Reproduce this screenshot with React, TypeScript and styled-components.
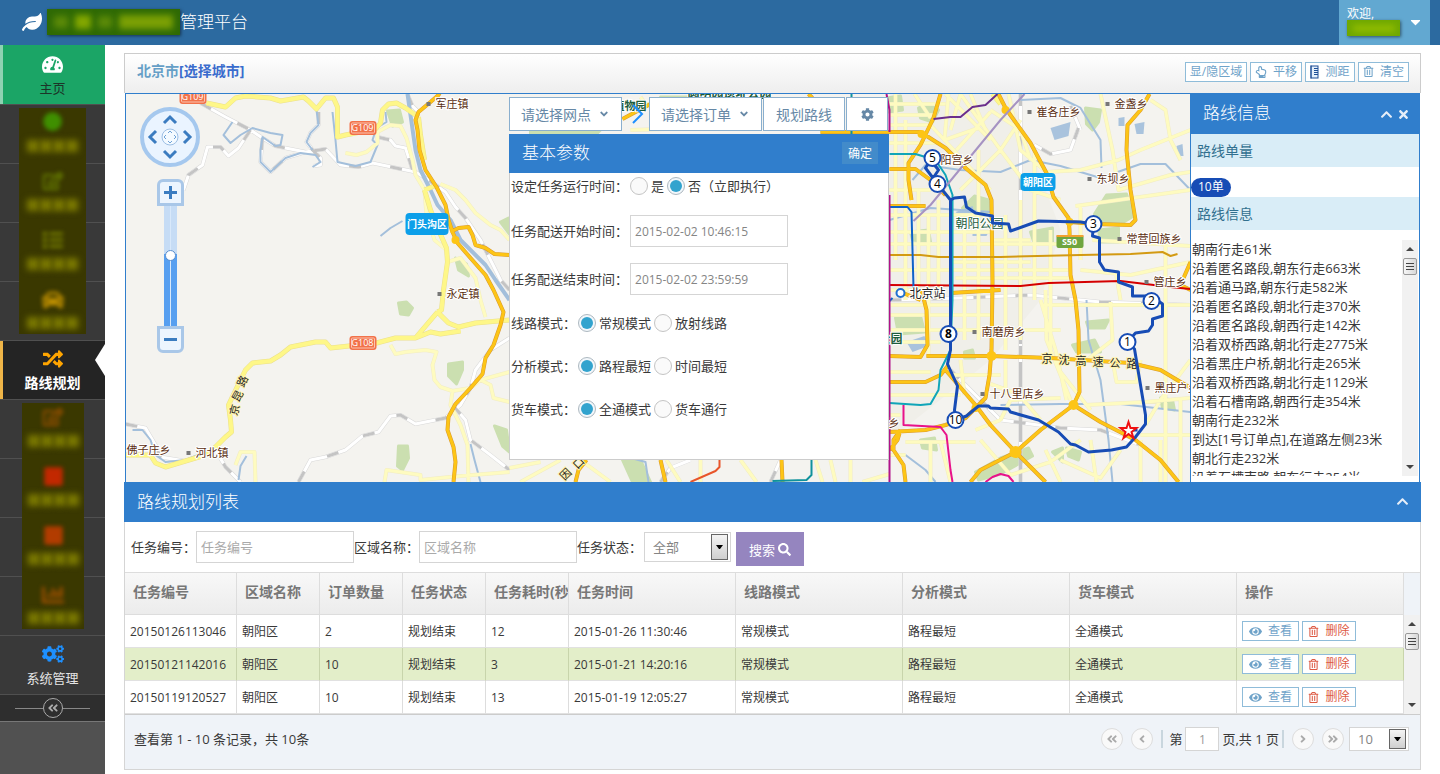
import React from 'react';
import styled, { createGlobalStyle, css } from 'styled-components';
import {
  FaLeaf, FaTachometerAlt, FaRandom, FaCogs, FaAngleDoubleLeft, FaAngleDoubleRight, FaAngleLeft,
  FaAngleRight, FaAngleDown, FaChevronUp, FaTimes, FaCog, FaSearch, FaEye, FaRegTrashAlt,
  FaRegHandPointUp, FaCaretDown, FaRegEdit, FaCircle, FaList, FaCar, FaChartBar, FaSquare,
} from 'react-icons/fa';

const BLUE = '#307ecc';
const FONT = '"Open Sans", "Noto Sans CJK SC", sans-serif';

const GlobalStyle = createGlobalStyle`
  * { box-sizing: border-box; }
  body { margin: 0; background: #fff; color: #393939; font: 13px/19px ${FONT}; }
  button, input, select { font-family: inherit; margin: 0; border-radius: 0; outline: none; }
  button { cursor: pointer; }
  a { text-decoration: none; }
`;

/* ---------- frame ---------- */
const Page = styled.div`
  min-height: 100vh;
  display: flex;
  flex-direction: column;
`;
const NavBar = styled.header`
  height: 45px;
  display: flex;
  align-items: center;
  justify-content: space-between;
  padding: 0 10px 0 22px;
  background: #2c6aa0;
  color: #fff;
`;
const Brand = styled.div`
  display: flex;
  align-items: center;
  gap: 5px;
  padding-bottom: 2px;
  font-size: 17px;
  font-weight: 300;
`;
const BrandName = styled.div`
  display: flex;
  align-items: center;
`;
const Masked = styled.span<{ $w: number; $h: number; $bg: string }>`
  display: flex;
  align-items: center;
  justify-content: space-evenly;
  overflow: hidden;
  width: ${p => p.$w}px;
  height: ${p => p.$h}px;
  background: ${p => p.$bg};
  box-shadow: 1px 1px 3px rgba(0, 0, 0, 0.5);
`;
const Smudge = styled.i<{ $w: number; $h: number; $c: string }>`
  width: ${p => p.$w}px;
  height: ${p => p.$h}px;
  background: ${p => p.$c};
  filter: blur(3px);
`;
const UserMenu = styled.button`
  align-self: stretch;
  width: 91px;
  display: flex;
  align-items: center;
  gap: 8px;
  padding: 0 7px 2px 8px;
  border: 0;
  background: #62a8d1;
  color: #fff;
  text-align: left;
  font-size: 12px;
  line-height: 13px;
`;
const UserText = styled.span`
  display: flex;
  flex-direction: column;
`;
const Body = styled.div`
  flex: 1;
  display: flex;
`;

/* ---------- sidebar ---------- */
const SideBar = styled.nav`
  width: 105px;
  flex: none;
  display: flex;
  flex-direction: column;
  background: #515151;
`;
const SideGroup = styled.div`
  position: relative;
`;
const SideItem = styled.a<{ $kind?: 'home' | 'active' }>`
  position: relative;
  height: 59px;
  display: flex;
  flex-direction: column;
  align-items: center;
  gap: 3px;
  padding-top: 7px;
  border-bottom: 1px solid #505050;
  background: #393939;
  color: #e4e4e4;
  font-size: 13px;
  line-height: 20px;
  ${p => p.$kind === 'home' && css`
    height: 60px;
    padding-top: 8px;
    background: #1ba566;
    box-shadow: inset 3px 0 #8ed2b2;
    color: #1c3428;
  `}
  ${p => p.$kind === 'active' && css`
    background: #242424;
    box-shadow: inset 3px 0 #efb548;
    color: #fff;
    font-weight: bold;
    font-size: 14px;
    &::after {
      content: '';
      position: absolute;
      right: 0;
      top: 3px;
      border: solid transparent;
      border-width: 16px 10px 16px 0;
      border-right-color: #fff;
    }
  `}
`;
const SideIcon = styled.span<{ $c: string }>`
  height: 22px;
  display: flex;
  align-items: center;
  color: ${p => p.$c};
`;
const SideMask = styled.div<{ $l: number; $w: number }>`
  position: absolute;
  top: 3px;
  bottom: 7px;
  left: ${p => p.$l}px;
  width: ${p => p.$w}px;
  display: grid;
  grid-auto-rows: 59px;
  overflow: hidden;
  background: #3a3800;
`;
const MaskCell = styled.div`
  display: flex;
  flex-direction: column;
  align-items: center;
  gap: 8px;
  padding-top: 4px;
`;
const MaskIcon = styled.span<{ $c: string }>`
  height: 20px;
  display: flex;
  color: ${p => p.$c};
  filter: blur(2px);
`;
const MaskWord = styled.span`
  display: flex;
  gap: 1px;
`;
const Collapse = styled.button`
  height: 27px;
  display: flex;
  align-items: center;
  padding: 0 15px;
  border: 0;
  border-bottom: 1px solid #777;
  background: #2e2e2e;
  color: #aaa;
  &::before, &::after { content: ''; flex: 1; height: 1px; background: #888; }
`;
const CollapseDot = styled.span`
  width: 20px;
  height: 20px;
  display: flex;
  align-items: center;
  justify-content: center;
  border: 1px solid #aaa;
  border-radius: 50%;
`;

/* ---------- main ---------- */
const Main = styled.main`
  flex: 1;
  min-width: 0;
  padding: 8px 19px 4px;
`;
const TitleBar = styled.div`
  height: 40px;
  display: flex;
  align-items: center;
  justify-content: space-between;
  padding: 0 11px 4px 12px;
  border: 1px solid #ccc;
  border-bottom: 0;
  background: linear-gradient(#fff, #eee);
`;
const City = styled.div`
  padding-bottom: 2px;
  font-size: 14px;
  font-weight: bold;
  color: #669fc7;
  a { color: #3a6ccd; }
`;
const Tools = styled.div`
  display: flex;
  gap: 3px;
`;
const SmallButton = styled.button<{ $c?: string; $w: number }>`
  width: ${p => p.$w}px;
  height: 20px;
  display: inline-flex;
  align-items: center;
  justify-content: center;
  gap: 6px;
  padding: 0;
  border: 1px solid #8fbcd9;
  background: #fff;
  color: ${p => p.$c || '#6fa3c9'};
  font-size: 12px;
  line-height: 18px;
  white-space: nowrap;
`;

const MapRow = styled.div`
  display: flex;
  margin: 0 1px;
  border: solid ${BLUE};
  border-width: 1px 1px 0;
`;
const MapArea = styled.div`
  position: relative;
  flex: 1;
  min-width: 0;
  height: 388px;
  overflow: hidden;
`;
const MapSvg = styled.svg`
  display: block;
  width: 100%;
  height: 100%;
`;
const NavControl = styled.div`
  position: absolute;
  left: 14px;
  top: 13px;
  display: flex;
  flex-direction: column;
  align-items: center;
`;
const ZoomButton = styled.button<{ $last?: boolean }>`
  width: 27px;
  height: 27px;
  padding: 0;
  border: 3px solid #a9c7e8;
  border-radius: ${p => (p.$last ? '0 0 6px 6px' : '6px 6px 0 0')};
  background: #edf5fe;
  display: flex;
  align-items: center;
  justify-content: center;
  margin-top: ${p => (p.$last ? 0 : 12)}px;
`;
const ZoomRange = styled.input`
  appearance: none;
  writing-mode: vertical-lr;
  direction: rtl;
  width: 13px;
  height: 120px;
  padding: 0;
  background: linear-gradient(90deg, transparent 6px, #d8e8fa 6px, #d8e8fa 7px, transparent 7px),
    linear-gradient(#c6dcf5 40%, #579ff0 40%);
  &::-webkit-slider-thumb {
    appearance: none;
    width: 11px;
    height: 11px;
    border: 1px solid #5a8fcf;
    border-radius: 50%;
    background: #fff;
  }
`;
const MapTools = styled.div`
  position: absolute;
  left: 383px;
  top: 3px;
  display: flex;
  align-items: center;
`;
const MapButton = styled.button<{ $w: number }>`
  width: ${p => p.$w}px;
  height: 34px;
  margin-right: 1px;
  display: flex;
  align-items: center;
  justify-content: center;
  gap: 7px;
  padding: 0;
  border: 1px solid #8aafce;
  background: #fff;
  color: #6688a6;
  font-size: 14px;
`;
const Arrow = styled.svg`
  width: 26px;
  height: 24px;
`;
const Params = styled.form`
  position: absolute;
  left: 383px;
  top: 40px;
  width: 380px;
  height: 326px;
  border: 1px solid #ccc;
  border-top: 0;
  background: #fff;
`;
const PanelHead = styled.div<{ $h: number; $pr: number }>`
  height: ${p => p.$h}px;
  display: flex;
  align-items: center;
  justify-content: space-between;
  padding: 0 ${p => p.$pr}px 2px 13px;
  background: ${BLUE};
  color: #fff;
  h2 { margin: 0; font-size: 17px; font-weight: 300; }
`;
const ParamHead = styled(PanelHead)`
  margin: 0 -1px;
`;
const OkButton = styled.button`
  width: 36px;
  height: 22px;
  padding: 0;
  border: 0;
  background: #428bca;
  color: #fff;
  font-size: 12px;
`;
const ParamRows = styled.div`
  display: grid;
  grid-template-rows: 26px 64px 32px 56px 30px 56px;
  align-items: center;
`;
const ParamRow = styled.div`
  display: flex;
  align-items: center;
  padding-left: 1px;
`;
const ParamLabel = styled.label`
  padding-right: 2px;
`;
const Choice = styled.label`
  display: flex;
  align-items: center;
  gap: 3px;
  margin-right: 3px;
`;
const Radio = styled.input`
  appearance: none;
  width: 18px;
  height: 18px;
  border: 1px solid #c4c4c4;
  border-radius: 9px;
  background: #fafafa;
  display: flex;
  align-items: center;
  justify-content: center;
  &:checked { border-color: #adb8c0; background: #f2f7fb; }
  &:checked::after {
    content: '';
    width: 12px;
    height: 12px;
    border-radius: 50%;
    background: #32a3ce;
  }
`;
const TextBox = styled.input`
  width: 158px;
  height: 32px;
  padding: 0 4px;
  border: 1px solid #d5d5d5;
  background: #fff;
  color: #858585;
  font-size: 12px;
  &::placeholder { color: #aaa; font-size: 13px; }
`;

/* ---------- route info ---------- */
const Info = styled.aside`
  width: 229px;
  flex: none;
  height: 388px;
  border-left: 1px solid ${BLUE};
  display: flex;
  flex-direction: column;
  align-items: flex-start;
  background: #fff;
`;
const InfoHead = styled(PanelHead)`
  width: 100%;
  padding-left: 12px;
  padding-bottom: 4px;
`;
const HeadIcons = styled.span`
  display: flex;
  gap: 4px;
  padding-top: 4px;
`;
const IconButton = styled.button`
  display: flex;
  padding: 0;
  border: 0;
  background: none;
  color: #e6eef8;
`;
const InfoSection = styled.h3`
  width: 100%;
  height: 33px;
  margin: 0;
  padding: 0 6px;
  background: #d9edf7;
  color: #31708f;
  font-size: 14px;
  line-height: 34px;
  font-weight: normal;
`;
const Badge = styled.span`
  height: 19px;
  margin-top: 11px;
  padding: 0 7px;
  border-radius: 10px;
  background: #174cb5;
  color: #fff;
  font-size: 12px;
  line-height: 18px;
`;
const StepsBox = styled.div`
  width: 100%;
  height: 236px;
  margin-top: 10px;
  padding-right: 1px;
  display: flex;
  overflow: hidden;
`;
const Steps = styled.ol`
  flex: 1;
  margin: 0;
  padding: 0 0 0 1px;
  list-style: none;
  white-space: nowrap;
`;
const ScrollTrack = styled.div`
  width: 16px;
  display: flex;
  flex-direction: column;
  align-items: center;
  background: #f1f1f1;
`;
const ScrollThumb = styled.span`
  width: 14px;
  height: 17px;
  flex: none;
  display: flex;
  align-items: center;
  justify-content: center;
  border: 1px solid #999;
  border-radius: 2px;
  background: linear-gradient(90deg, #f6f6f6, #d8d8d8);
`;
const ScrollArrow = styled.svg`
  width: 16px;
  height: 18px;
  &:last-child { margin-top: auto; }
`;

/* ---------- list ---------- */
const ListBody = styled.section`
  border: 1px solid #d5d5d5;
  border-top: 0;
`;
const Filter = styled.form`
  height: 50px;
  display: flex;
  align-items: center;
  padding: 0 6px;
  label { white-space: nowrap; }
`;
const FilterSelect = styled.span<{ $w: number; $h: number }>`
  position: relative;
  display: flex;
  select {
    appearance: none;
    width: ${p => p.$w}px;
    height: ${p => p.$h}px;
    padding: 0 8px;
    border: 1px solid #d5d5d5;
    background: #fff;
    color: #858585;
    font-size: 13px;
  }
`;
const StateSelect = styled(FilterSelect)`
  margin-left: 2px;
`;
const SelectArrow = styled.span`
  position: absolute;
  right: 3px;
  top: 2px;
  bottom: 2px;
  width: 17px;
  display: flex;
  align-items: center;
  justify-content: center;
  border: 1px solid #666;
  background: linear-gradient(#f4f4f4, #cfcfcf);
  color: #000;
  pointer-events: none;
`;
const SearchButton = styled.button`
  width: 68px;
  height: 34px;
  margin: 4px 0 0 5px;
  display: flex;
  align-items: center;
  justify-content: center;
  gap: 3px;
  padding: 0;
  border: 0;
  background: #9585bf;
  color: #fff;
  font-size: 13px;
`;
const TableWrap = styled.div`
  display: flex;
  background: #eff3f8;
  border-top: 1px solid #ddd;
  border-bottom: 1px solid #ccc;
`;
const TableBox = styled.div`
  flex: 1;
  min-width: 0;
`;
const Table = styled.table`
  width: 100%;
  table-layout: fixed;
  border-collapse: separate;
  border-spacing: 0;
  background: #fff;
  th, td {
    overflow: hidden;
    white-space: nowrap;
    text-align: left;
    border-right: 1px solid #ddd;
  }
  th {
    height: 42px;
    padding: 0 0 4px 8px;
    border-bottom: 1px solid #ddd;
    background: linear-gradient(#f8f8f8, #ececec);
    color: #777;
    font-size: 14px;
  }
  td {
    height: 33px;
    padding: 0 5px;
    border-bottom: 1px solid #e1e1e1;
    font-size: 12px;
  }
`;
const Row = styled.tr<{ $on?: boolean }>`
  background: ${p => (p.$on ? '#e3eec9' : '#fff')};
  td { border-right-color: ${p => (p.$on ? '#c8d4ab' : '#ddd')}; }
`;
const Actions = styled.div`
  display: flex;
  gap: 3px;
`;
const TableScroll = styled.div`
  width: 17px;
  display: flex;
  justify-content: center;
  padding-top: 42px;
`;
const Pager = styled.footer`
  height: 54px;
  display: flex;
  justify-content: space-between;
  align-items: center;
  padding: 0 11px 6px 9px;
  background: #eff3f8;
`;
const PagerControls = styled.div`
  display: flex;
  align-items: center;
`;
const RoundGroup = styled.span`
  display: flex;
  gap: 8px;
  margin: 0 5px 0 2px;
`;
const Round = styled.button`
  width: 22px;
  height: 22px;
  display: flex;
  align-items: center;
  justify-content: center;
  padding: 0;
  border: 1px solid #ddd;
  border-radius: 50%;
  background: #f9f9f9;
  color: #aaa;
`;
const Divider = styled.span`
  width: 2px;
  height: 18px;
  margin: 0 6px 0 3px;
  background: #c9d6de;
`;
const PageNo = styled.input`
  width: 34px;
  height: 24px;
  margin: 0 3px;
  padding: 0;
  border: 1px solid #d5d5d5;
  text-align: center;
  color: #999;
  font-size: 12px;
`;

/* ---------- data ---------- */
const steps = [
  '朝南行走61米', '沿着匿名路段,朝东行走663米', '沿着通马路,朝东行走582米', '沿着匿名路段,朝北行走370米',
  '沿着匿名路段,朝西行走142米', '沿着双桥西路,朝北行走2775米', '沿着黑庄户桥,朝北行走265米',
  '沿着双桥西路,朝北行走1129米', '沿着石槽南路,朝西行走354米', '朝南行走232米',
  '到达[1号订单点],在道路左侧23米', '朝北行走232米', '沿着石槽南路,朝东行走254米',
];
const columns: [string, number][] = [
  ['任务编号', 112], ['区域名称', 83], ['订单数量', 83], ['任务状态', 83], ['任务耗时(秒)', 83],
  ['任务时间', 167], ['线路模式', 167], ['分析模式', 167], ['货车模式', 167], ['操作', 167],
];
const rows = [
  ['20150126113046', '朝阳区', '2', '规划结束', '12', '2015-01-26 11:30:46', '常规模式', '路程最短', '全通模式'],
  ['20150121142016', '朝阳区', '10', '规划结束', '3', '2015-01-21 14:20:16', '常规模式', '路程最短', '全通模式'],
  ['20150119120527', '朝阳区', '10', '规划结束', '13', '2015-01-19 12:05:27', '常规模式', '路程最短', '全通模式'],
];
const modes = [
  { label: '线路模式：', name: 'line', options: ['常规模式', '放射线路'] },
  { label: '分析模式：', name: 'analysis', options: ['路程最短', '时间最短'] },
  { label: '货车模式：', name: 'truck', options: ['全通模式', '货车通行'] },
];

/* ---------- map data ---------- */
const parks = [
  '387,111 399,110 402,122 392,126', '398,303 406,302 412,308 408,315 400,314', '448,364 462,362 462,370 456,384 448,376',
  '398,446 407,446 408,458 402,470 397,466', '494,426 506,430 509,452 502,446', '622,460 640,460 650,482 632,482',
  '918,108 930,104 938,110 932,122 920,118', '1085,108 1100,110 1098,122 1092,130 1086,124',
  '1106,195 1126,194 1133,216 1120,224 1104,222 1094,214', '974,196 988,200 990,212 975,216 962,208',
  '1030,232 1052,228 1052,242 1034,244', '1098,230 1118,228 1118,242 1100,242', '1072,345 1094,340 1100,352 1076,352',
  '975,472 1000,458 1028,448 1032,456 1000,474 978,480', '1066,448 1080,452 1078,460 1068,456', '1160,398 1172,400 1174,410 1162,408',
  '895,318 920,316 924,332 898,334', '964,352 972,350 974,358 964,358', '1052,452 1062,448 1062,462', '455,258 466,264 468,276 458,270',
  '500,222 508,218 509,234', '886,98 900,96 902,110 888,112', '1086,322 1108,320 1104,328 1088,328', '920,440 934,438 936,450 922,448',
  '660,97 690,97 690,112 664,110', '530,130 600,130 596,134 530,134', '910,232 928,230 930,242 912,240',
];
const waters = [
  '1050,128 1070,122 1068,136 1054,140', '1134,124 1144,122 1143,134 1136,134', '1118,118 1124,117 1124,126 1118,126',
  '955,212 972,206 974,213 960,216', '906,342 924,336 928,346 912,352', '1176,146 1182,144 1183,156 1178,156', '972,230 988,232 986,236 972,236',
];
const rivers = [
  'M232 122 223 135 230 143 240 135 252 128 270 133 282 135 280 145 275 146 262 137 260 150 260 162 270 172 285 158 300 153 315 155 320 162 312 167',
  'M316 110 318 125 310 133 306 142 312 150 M332 112 335 140 337 162 355 166 370 162 377 145 372 140 376 128 386 122 385 112',
  'M380 236 390 228 402 221', 'M132 430 142 430 150 440 155 455 165 462 185 460 215 448', 'M470 444 474 460 480 482', 'M620 455 645 462 648 482',
  'M1020 100 1060 98 1080 108 1100 140 1101 168', 'M889 220 930 208 990 212', 'M912 180 925 165 960 170 1000 172 1030 160 1060 166 1100 178 1140 164 1165 164 1190 190',
  'M1086 300 1088 340 1100 380 1108 440 1112 482', 'M1000 405 1060 404 1120 404 1190 412', 'M905 455 925 470 935 482', 'M238 480 240 466 246 456',
];
const minor = [
  'M889 115H935 M889 125H930 M889 143H940 M889 190H930 M889 232H990 M889 244H1066 M889 270H1068 M889 315H990 M889 330H1060',
  'M889 342H940 M889 372H930 M889 215H990 M889 395H960 M889 415H900 M895 94V260 M905 120V300 M918 190V300 M928 215V356 M938 200V300 M964 230V340 M978 150V340',
  'M1005 215V350 M1020 200V340 M1034 150V300 M1050 230V360 M960 94 1000 150 1030 190 1060 200 M945 94 990 140 M930 125 990 190 M960 190 1000 150 1020 120',
  'M990 110 1020 130 1030 160 M1008 94 1020 150 1046 172 1080 170 1118 160 1140 150 1190 130 M1080 204V260 M1100 94 1112 150 1118 190 1170 175 1190 172',
  'M1150 100 1165 110 1170 140 1180 160 M1075 206 1118 200 1190 190 M1092 240 1190 246 M1080 270 1130 275 1190 262 M1040 305H1190 M1045 290 1046 340 1070 400',
  'M1040 300 1055 350 1066 400 M1110 302 1112 340 1080 365 M1112 360 1116 382 1136 382 1140 360 M1060 372 1090 410 M1085 405 1145 402 1190 398',
  'M1140 435 1190 435 M1190 360 1160 400 1145 425 M990 384 1018 394 1040 420 M975 430 1000 420 M1000 420 1010 400 1060 398 M905 442H975 M930 442V482 M940 442 950 482',
  'M980 440 1010 475 1050 462 1080 440 M1045 450 1060 482 M1060 460 1100 478 1120 450 M1140 440V482 M1160 440V482 M1180 398V482 M1090 440 1096 482 M1165 240V300 1170 340',
  'M889 455H905 M960 360 964 395 M950 375H1000 M1005 360V395 M1055 305H1110 1190 M1120 300 1115 270 M914 94 930 118 M889 104H945 M960 94 950 130',
  'M948 94 944 140 978 128 M956 150 990 112 M970 94 985 130 M890 290 940 290 M890 305 950 305 M950 262 1030 262 M955 278 1068 278 M992 240 1030 240',
  'M509 468 540 462 M520 482 560 460 M580 460 610 482 M666 460 680 482 M740 460 756 482 M815 460 822 482 M830 460 835 482 M850 482V460 M862 482 889 474 M700 460V482',
  'M345 153 356 155 366 152 377 143 377 132 390 125 400 126 406 138 412 160 415 175 424 190', 'M440 184 455 190 465 200 475 213 490 225 500 230 509 240',
  'M424 190 426 215 434 240 446 250', 'M447 262 460 258 475 278 480 300 485 317', 'M390 345 395 354 405 352 425 350 436 352 432 365 434 380 440 387 452 391 470 388 480 380 509 372',
  'M452 391 450 405 460 425 467 445 468 482', 'M480 380 490 385 493 398 509 402', 'M384 482 386 470 420 475 420 480 460 476 509 472', 'M235 465 240 452 254 452 255 482',
  'M640 97 645 104 660 104 M630 130 700 128',
];
const yellow = [
  'M206 103 225 107 235 98 245 96 270 98 280 101 303 97 308 101 316 109 325 98 333 98 337 107 337 137 345 135 375 129 380 123 382 110 388 104 396 103 405 108 418 117',
  'M418 117 420 135 424 160', 'M424 190 434 186 M424 190 430 210 438 230 446 248 447 262 443 290 441 310 437 312',
  'M125 455 150 455 155 463 165 467 185 461 205 455 215 447 225 437 231 432 230 420 228 405 240 380 245 370 252 363 270 361 280 355 290 347 315 342 325 342 330 348 376 343 395 338 415 338 420 332 437 312',
  'M437 312 448 323 458 327 475 323 509 320', 'M415 338 430 332 440 334 460 331', 'M992 94 1000 104',
];
const rails = [
  'M200 103 225 117 250 130 262 138 275 146 305 152 325 149 340 165 358 167 372 163 415 172 425 178 445 192 455 207 465 218 480 240 490 260 500 280 509 290',
  'M250 130 238 148 228 156 220 147 207 147 202 165 188 175 183 190', 'M262 138 260 162 270 172 285 158 305 152', 'M318 112 318 125 310 133 306 142 312 150 320 158 320 165 313 166',
  'M377 137 390 140 395 146 405 148 412 170', 'M407 94 412 106 418 112', 'M125 424 145 428 155 445 160 457 185 461 215 450 225 467 240 482',
  'M298 482 310 460 325 457 345 450 362 436 378 432 390 416 400 415 415 424 445 418 460 405 470 388 475 370 490 350 509 338',
  'M452 405 465 420 470 440 490 455 509 470', 'M889 300 960 298 1030 295 1100 302 1190 305', 'M1020 94V270 1032 290V340 1036 370', 'M950 370 975 395 1000 420 1060 428 1100 430 1140 445',
  'M1078 128 1070 150 1050 154 1034 145', 'M1070 106 1080 130', 'M660 482 670 468 690 460', 'M770 482 780 460',
];
const highways = [
  'M441 90 438 95 430 102 418 112 415 120 417 130 419 150 425 170 436 187 445 205 448 220 452 232 457 243 470 258 485 275 493 290 503 312 500 325 493 345 485 358 482 374 470 388 455 404 448 417 447 430 453 447 455 462 453 482',
  'M450 232 458 228 468 227 472 235 475 245 485 248 494 254 509 255',
  'M998 94 1005 108 1012 118 1030 143 1046 173 1053 197 1068 218 1069 230 1070 275 1075 300 1078 330 1079 392 1073 405',
  'M889 132 920 132 945 148 965 168 985 185 991 200 992 282 991 350 989 375 985 398 975 408', 'M889 169 915 169 930 180 945 195',
  'M940 94 933 118 920 145 908 163 908 180 911 200', 'M1149 94 1140 110 1127 125 1126 150 1130 190 1135 220 1130 225 1095 224 1069 222',
  'M889 382 925 382 940 375 948 365', 'M889 432 925 430 945 425 965 418 975 408', 'M921 290 926 310 927 345 920 357 889 356', 'M920 300 900 292',
  'M926 356 990 356 1050 358 1130 363 1160 370 1190 388', 'M945 370 975 405 990 425 1015 452 1045 482',
  'M970 482 980 470 1015 452 1040 430 1073 405 1100 422 1135 440 1160 460 1178 482', 'M900 430 893 440 893 450 903 465 905 482', 'M889 206H925',
  'M950 293 1000 290', 'M660 460 665 482', 'M781 460 782 482', 'M575 482 578 470 586 460', 'M622 119 650 104', 'M889 450 897 440 900 430',
  'M1190 262 1180 285 1190 290', 'M708 94 716 98', 'M808 94 812 98', 'M820 132H889',
];
const subways: [string, string][] = [
  ['#d39a12', 'M889 255 920 255 938 257 1000 257 1080 255 1130 254 1162 252 1170 256 1177 254'],
  ['#d40000', 'M889 285 1020 286 1048 283 1120 281 1170 287 1190 289'],
  ['#10a5b8', 'M889 154 915 154 935 160 945 175 952 195 952 300 950 350 940 370 938 390 930 404 920 405 889 403'],
  ['#6b2f8c', 'M933 119 950 117 960 117 972 107 985 105 997 94'],
  ['#a693c2', 'M913 221 930 205 1000 120 1024 94'],
  ['#0e63c8', 'M889 207 907 207 911 212 913 288 M892 298 882 308'],
  ['#b0128a', 'M886 94 889 110 889 132 M889 195V300 892 325 893 402'],
  ['#e8128a', 'M903 405 903 425 940 427 946 435 950 470 952 482 M985 482 992 477 1000 474 1008 476 1013 482'],
  ['#e8552a', 'M690 482 715 471 719 467 719 460'],
  ['#10929c', 'M772 481 806 480 811 475 811 460 M851 94V134'],
];
const route = 'M1128 430 1137 430 M1127 342 1134 349 1145 415 1145 424 1135 437 1126 447 1111 450 1088 452 1075 445 1070 444 1058 432 1038 420 1010 412 1008 409 990 408 988 406 978 406 966 416 955 420 954 410 957 386 947 364 950 350 950 200 937 184 925 168 930 160 938 170 930 182 M950 200 954 198 964 197 966 207 975 213 992 216 992 223 1008 224 1010 231 1038 221 1080 222 1093 224 1092 236 1099 238 1099 262 1104 270 1118 272 1118 282 1132 287 1132 296 1151 296 1162 304 1162 316 1152 319 1152 325 1148 331 1135 333 1127 342';
const places: [number, number, string, boolean][] = [
  [435, 108, '军庄镇', true], [446, 298, '永定镇', true], [195, 457, '河北镇', true], [126, 454, '佛子庄乡', false],
  [940, 164, '阳宫乡', false], [1036, 116, '崔各庄乡', true], [1114, 108, '金盏乡', true], [1096, 183, '东坝乡', true],
  [1126, 243, '常营回族乡', true], [1153, 286, '管庄乡', true], [981, 336, '南磨房乡', true], [989, 398, '十八里店乡', true],
  [1154, 392, '黑庄户乡', true], [877, 427, '百乡', false],
];
const pins: [number, number, string][] = [
  [932, 158, '5'], [937, 184, '4'], [1093, 224, '3'], [1151, 301, '2'], [1127, 342, '1'], [948, 334, '8'], [955, 420, '10'],
];
const shields: [number, number, string][] = [[192, 97, 'G109'], [362, 128, 'G109'], [362, 343, 'G108']];
const glyphs: [number, number, string, number][] = [
  [234, 410, '京', -75], [237, 396, '昆', -60], [242, 381, '路', -65], [578, 463, '口', -45], [565, 474, '因', -45],
];
const districts: [number, number, number, string][] = [[405, 213, 43, '门头沟区'], [1020, 173, 35, '朝阳区']];

function Strokes({ d, color, width, dash }: { d: string[]; color: string; width: number; dash?: string }) {
  return <path d={d.join(' ')} fill="none" stroke={color} strokeWidth={width} strokeDasharray={dash} strokeLinejoin="round" />;
}

function CityMap() {
  return (
    <MapSvg viewBox="125 94 1065 388" preserveAspectRatio="xMidYMid slice" role="img" aria-label="地图" fontFamily={FONT} fontSize="12">
      <rect x="125" y="94" width="1065" height="388" fill="#f4f3ef" />
      <path d="M889 94H1010L1060 230 1040 300 990 360 889 440Z" fill="#f0efe9" />
      {parks.map(p => <polygon key={p} points={p} fill="#cbdfb0" strokeLinejoin="round" stroke="#cbdfb0" strokeWidth="3" />)}
      {waters.map(p => <polygon key={p} points={p} fill="#a9c3dd" />)}
      <Strokes d={rails} color="#d8d8d8" width={4} />
      <Strokes d={rails} color="#ffffff" width={3} />
      <Strokes d={rails} color="#c4c4c4" width={3} dash="12 30" />
      <Strokes d={rivers} color="#a3bfdb" width={2} />
      <Strokes d={['M407 94 410 115 415 150 420 170 430 190 437 205 450 220 460 240 470 250 485 265 495 280 509 300']} color="#a3bfdb" width={4} />
      <Strokes d={minor} color="#f1ecc4" width={4} />
      <Strokes d={minor} color="#fefbc0" width={3} />
      <Strokes d={yellow} color="#ebe08c" width={5} />
      <Strokes d={yellow} color="#fef788" width={4} />
      <Strokes d={highways} color="#d99a30" width={4} />
      <Strokes d={highways} color="#fdc516" width={3} />
      <g fill="#fdc516">
        <circle cx="1005" cy="110" r="4" /><circle cx="991" cy="356" r="5" /><circle cx="1015" cy="452" r="6" />
        <circle cx="1073" cy="405" r="5" /><circle cx="975" cy="408" r="4" /><circle cx="1069" cy="222" r="4" />
        <circle cx="921" cy="134" r="4" /><circle cx="1079" cy="360" r="4" /><circle cx="455" cy="240" r="4" />
      </g>
      {subways.map(([c, d]) => <path key={d} d={d} fill="none" stroke={c} strokeWidth="2" strokeLinejoin="round" />)}

      <g fill="#5a2d10" stroke="#fff" strokeWidth="2" paintOrder="stroke" fontSize="11">
        {places.map(([x, y, name]) => <text key={name} x={x} y={y}>{name}</text>)}
      </g>
      {places.filter(p => p[3]).map(([x, y, name]) => <rect key={name} x={x - 9} y={y - 6} width="4" height="4" fill="#777" />)}
      <g fill="#1c5c3c" stroke="#fff" strokeWidth="2" paintOrder="stroke">
        <text x="955" y="228">朝阳公园</text>
        <text x="613" y="110" fontSize="11" fontWeight="bold">植物园</text>
        <text x="687" y="98" fontWeight="bold">圆明园遗址公园</text>
        <text x="878" y="343" fontWeight="bold">公园</text>
      </g>
      <circle cx="900" cy="293" r="4" fill="#fff" stroke="#1f6fd0" strokeWidth="2" />
      <text x="909" y="298" fill="#222" stroke="#fff" strokeWidth="2" paintOrder="stroke">北京站</text>
      {'京沈高速公路'.split('').map((ch, i) => (
        <text key={ch} x={1041 + i * 17} y={363 + i} fontSize="11" fill="#222" stroke="#fff3b0" strokeWidth="2" paintOrder="stroke">{ch}</text>
      ))}
      {glyphs.map(([x, y, ch, a]) => (
        <text key={ch} x={x} y={y + 4} fontSize="11" transform={`rotate(${a} ${x} ${y})`} textAnchor="middle" fill="#222" stroke="#fff3b0" strokeWidth="2" paintOrder="stroke">{ch}</text>
      ))}
      {shields.map(([x, y, t]) => (
        <g key={`${x}-${y}`}>
          <rect x={x - 13} y={y - 7} width="27" height="14" rx="3" fill="#f2724a" />
          <rect x={x - 11} y={y - 5} width="23" height="10" rx="1" fill="none" stroke="#fbc4b0" />
          <text x={x} y={y + 3} fontSize="9" textAnchor="middle" fill="#fff">{t}</text>
        </g>
      ))}
      <rect x="1056" y="235" width="27" height="13" rx="2" fill="#6fa53f" />
      <rect x="1056" y="235" width="27" height="2" fill="#f0a030" />
      <text x="1069" y="245" fontSize="9" fontWeight="bold" textAnchor="middle" fill="#fff">S50</text>
      {districts.map(([x, y, w, t]) => (
        <g key={t}>
          <rect x={x} y={y} width={w} height={t.length > 3 ? 22 : 18} rx="4" fill="#0c9fe9" />
          <text x={x + w / 2} y={y + (t.length > 3 ? 15 : 13)} fontSize="10" fontWeight="bold" textAnchor="middle" fill="#fff">{t}</text>
        </g>
      ))}

      <path d={route} fill="none" stroke="#174cb5" strokeWidth="3" strokeLinejoin="round" />
      {pins.map(([x, y, t]) => (
        <g key={t}>
          <circle cx={x} cy={y} r="8" fill="#fff" stroke="#174cb5" strokeWidth="2" />
          <text x={x} y={y + 4} textAnchor="middle" fill="#000" fontWeight={t === '8' ? 'bold' : undefined}>{t}</text>
        </g>
      ))}
      <path d="M1128 422 1130 428 1136 428 1131 432 1133 438 1128 434 1123 438 1125 432 1120 428 1126 428Z" fill="#fff" stroke="#f01010" strokeWidth="2" />
    </MapSvg>
  );
}

function PanPad() {
  return (
    <svg width="60" height="60" viewBox="1 1 60 60" role="img" aria-label="平移地图">
      <circle cx="31" cy="31" r="28" fill="#eaf4ff" stroke="#a5c8ee" strokeWidth="4" />
      <g fill="none" stroke="#3b7cc0" strokeWidth="3">
        <path d="M25 17 31 11 37 17" /><path d="M25 45 31 51 37 45" />
        <path d="M17 25 11 31 17 37" /><path d="M45 25 51 31 45 37" />
      </g>
      <circle cx="31" cy="31" r="8" fill="#f4faff" stroke="#9dbfe4" />
      <g fill="none" stroke="#6fa3d8"><path d="M29 27 31 25 33 27M29 35 31 37 33 35M27 29 25 31 27 33M35 29 37 31 35 33" /></g>
    </svg>
  );
}

function ScrollBar() {
  return (
    <ScrollTrack aria-hidden="true">
      <ScrollArrow viewBox="0 0 16 18"><path d="M4 11 8 7 12 11Z" fill="#444" /></ScrollArrow>
      <ScrollThumb>
        <svg width="8" height="9"><path d="M0 1.5H8M0 4.5H8M0 7.5H8" stroke="#444" /></svg>
      </ScrollThumb>
      <ScrollArrow viewBox="0 0 16 18"><path d="M4 7 8 11 12 7Z" fill="#444" /></ScrollArrow>
    </ScrollTrack>
  );
}

function HiddenItems({ left, width, items }: { left: number; width: number; items: [React.ReactNode, string][] }) {
  return (
    <SideGroup>
      {items.map((_, i) => <SideItem key={i} href="#" aria-label="菜单" />)}
      <SideMask $l={left} $w={width}>
        {items.map(([icon, color], i) => (
          <MaskCell key={i}>
            <MaskIcon $c={color}>{icon}</MaskIcon>
            <MaskWord>
              {[0, 1, 2, 3].map(n => <Smudge key={n} $w={12} $h={12} $c="#7c7a00" />)}
            </MaskWord>
          </MaskCell>
        ))}
      </SideMask>
    </SideGroup>
  );
}

function DropArrow() {
  return <SelectArrow><svg width="7" height="4"><path d="M0 0H7L4 4H3Z" /></svg></SelectArrow>;
}

export default function App() {
  return (
    <Page>
      <GlobalStyle />
      <NavBar>
        <Brand>
          <FaLeaf size={20} />
          <BrandName>
            <Masked $w={133} $h={26} $bg="#2f6a05">
              <Smudge $w={14} $h={12} $c="#5c8a08" /><Smudge $w={16} $h={14} $c="#84a800" />
              <Smudge $w={14} $h={12} $c="#5c8a08" /><Smudge $w={54} $h={14} $c="#7ba004" />
            </Masked>
            管理平台
          </BrandName>
        </Brand>
        <UserMenu type="button">
          <UserText>欢迎,<Masked $w={53} $h={16} $bg="#6fa800"><Smudge $w={42} $h={7} $c="#93bd00" /></Masked></UserText>
          <FaCaretDown size={16} />
        </UserMenu>
      </NavBar>

      <Body>
        <SideBar>
          <SideItem href="#" $kind="home"><SideIcon $c="#fff"><FaTachometerAlt size={21} /></SideIcon>主页</SideItem>
          <HiddenItems
            left={19}
            width={67}
            items={[[<FaCircle size={19} />, '#3f8f00'], [<FaRegEdit size={20} />, '#6f8a00'], [<FaList size={20} />, '#808a00'], [<FaCar size={22} />, '#c09000']]}
          />
          <SideItem href="#" $kind="active"><SideIcon $c="#ffa500"><FaRandom size={20} /></SideIcon>路线规划</SideItem>
          <HiddenItems
            left={22}
            width={62}
            items={[[<FaRegEdit size={20} />, '#a85400'], [<FaSquare size={21} />, '#c22800'], [<FaSquare size={21} />, '#b23c00'], [<FaChartBar size={22} />, '#a05000']]}
          />
          <SideItem href="#"><SideIcon $c="#1e90ff"><FaCogs size={22} /></SideIcon>系统管理</SideItem>
          <Collapse type="button" aria-label="收起菜单"><CollapseDot><FaAngleDoubleLeft size={12} /></CollapseDot></Collapse>
        </SideBar>

        <Main>
          <TitleBar>
            <City>北京市<a href="#">[选择城市]</a></City>
            <Tools>
              <SmallButton type="button" $w={62}>显/隐区域</SmallButton>
              <SmallButton type="button" $w={52}><FaRegHandPointUp size={12} />平移</SmallButton>
              <SmallButton type="button" $w={50}>
                <svg width="9" height="14"><rect x="1" y="1" width="7" height="12" fill="#e5f0fb" stroke="#1e4f96" /><path d="M4 3.5H8M4 5.5H8M4 7.5H8M4 9.5H8M1 .5V13.5" stroke="#1e4f96" /></svg>
                测距
              </SmallButton>
              <SmallButton type="button" $w={51}><FaRegTrashAlt size={11} />清空</SmallButton>
            </Tools>
          </TitleBar>

          <MapRow>
            <MapArea>
              <CityMap />
              <NavControl>
                <PanPad />
                <ZoomButton type="button" aria-label="放大"><svg width="15" height="15"><path d="M1 7.5H14M7.5 1V14" stroke="#3b7cc0" strokeWidth="3" /></svg></ZoomButton>
                <ZoomRange type="range" aria-label="缩放级别" defaultValue={60} />
                <ZoomButton type="button" aria-label="缩小" $last><svg width="15" height="15"><path d="M1 7.5H14" stroke="#3b7cc0" strokeWidth="3" /></svg></ZoomButton>
              </NavControl>
              <MapTools>
                <MapButton type="button" $w={113}>请选择网点<FaAngleDown size={12} /></MapButton>
                <Arrow viewBox="0 0 26 24"><path d="M10 3 19 12 10 21" fill="none" stroke="#1e90ff" strokeWidth="2" /></Arrow>
                <MapButton type="button" $w={113}>请选择订单<FaAngleDown size={12} /></MapButton>
                <MapButton type="button" $w={82}>规划路线</MapButton>
                <MapButton type="button" $w={42} aria-label="设置"><FaCog size={13} /></MapButton>
              </MapTools>
              <Params onSubmit={e => e.preventDefault()}>
                <ParamHead $h={39} $pr={11}><h2>基本参数</h2><OkButton>确定</OkButton></ParamHead>
                <ParamRows>
                  <ParamRow>
                    <ParamLabel as="span">设定任务运行时间：</ParamLabel>
                    <Choice><Radio type="radio" name="run" />是</Choice>
                    <Choice><Radio type="radio" name="run" defaultChecked />否（立即执行）</Choice>
                  </ParamRow>
                  <ParamRow><ParamLabel htmlFor="start">任务配送开始时间：</ParamLabel><TextBox id="start" defaultValue="2015-02-02 10:46:15" /></ParamRow>
                  <ParamRow><ParamLabel htmlFor="end">任务配送结束时间：</ParamLabel><TextBox id="end" defaultValue="2015-02-02 23:59:59" /></ParamRow>
                  {modes.map(m => (
                    <ParamRow key={m.name}>
                      <ParamLabel as="span">{m.label}</ParamLabel>
                      {m.options.map((o, i) => <Choice key={o}><Radio type="radio" name={m.name} defaultChecked={i === 0} />{o}</Choice>)}
                    </ParamRow>
                  ))}
                </ParamRows>
              </Params>
            </MapArea>

            <Info>
              <InfoHead $h={40} $pr={9}>
                <h2>路线信息</h2>
                <HeadIcons>
                  <IconButton type="button" aria-label="收起"><FaChevronUp size={13} /></IconButton>
                  <IconButton type="button" aria-label="关闭"><FaTimes size={13} /></IconButton>
                </HeadIcons>
              </InfoHead>
              <InfoSection>路线单量</InfoSection>
              <Badge>10单</Badge>
              <InfoSection>路线信息</InfoSection>
              <StepsBox>
                <Steps>{steps.map((s, i) => <li key={i}>{s}</li>)}</Steps>
                <ScrollBar />
              </StepsBox>
            </Info>
          </MapRow>

          <PanelHead $h={40} $pr={12}>
            <h2>路线规划列表</h2>
            <IconButton type="button" aria-label="收起"><FaChevronUp size={13} /></IconButton>
          </PanelHead>
          <ListBody>
            <Filter onSubmit={e => e.preventDefault()}>
              <label htmlFor="task">任务编号：</label><TextBox id="task" placeholder="任务编号" />
              <label htmlFor="area">区域名称：</label><TextBox id="area" placeholder="区域名称" />
              <label htmlFor="state">任务状态：</label>
              <StateSelect $w={87} $h={30}><select id="state"><option>全部</option></select><DropArrow /></StateSelect>
              <SearchButton>搜索<FaSearch size={13} /></SearchButton>
            </Filter>
            <TableWrap>
              <TableBox>
                <Table>
                  <colgroup>{columns.map(([c, w]) => <col key={c} width={w} />)}</colgroup>
                  <thead><tr>{columns.map(([c]) => <th key={c}>{c}</th>)}</tr></thead>
                  <tbody>
                    {rows.map((r, i) => (
                      <Row key={r[0]} $on={i === 1}>
                        {r.map((c, j) => <td key={j}>{c}</td>)}
                        <td>
                          <Actions>
                            <SmallButton type="button" $w={57}><FaEye size={13} />查看</SmallButton>
                            <SmallButton type="button" $w={54} $c="#dd5a43"><FaRegTrashAlt size={11} />删除</SmallButton>
                          </Actions>
                        </td>
                      </Row>
                    ))}
                  </tbody>
                </Table>
              </TableBox>
              <TableScroll><ScrollBar /></TableScroll>
            </TableWrap>
            <Pager>
              <span>查看第 1 - 10 条记录，共 10条</span>
              <PagerControls>
                <RoundGroup>
                  <Round type="button" aria-label="首页"><FaAngleDoubleLeft size={12} /></Round>
                  <Round type="button" aria-label="上一页"><FaAngleLeft size={12} /></Round>
                </RoundGroup>
                <Divider />
                <label htmlFor="page">第</label>
                <PageNo id="page" defaultValue="1" />
                <span>页,共 1 页</span>
                <Divider />
                <RoundGroup>
                  <Round type="button" aria-label="下一页"><FaAngleRight size={12} /></Round>
                  <Round type="button" aria-label="末页"><FaAngleDoubleRight size={12} /></Round>
                </RoundGroup>
                <FilterSelect $w={60} $h={24}><select aria-label="每页条数"><option>10</option></select><DropArrow /></FilterSelect>
              </PagerControls>
            </Pager>
          </ListBody>
        </Main>
      </Body>
    </Page>
  );
}
